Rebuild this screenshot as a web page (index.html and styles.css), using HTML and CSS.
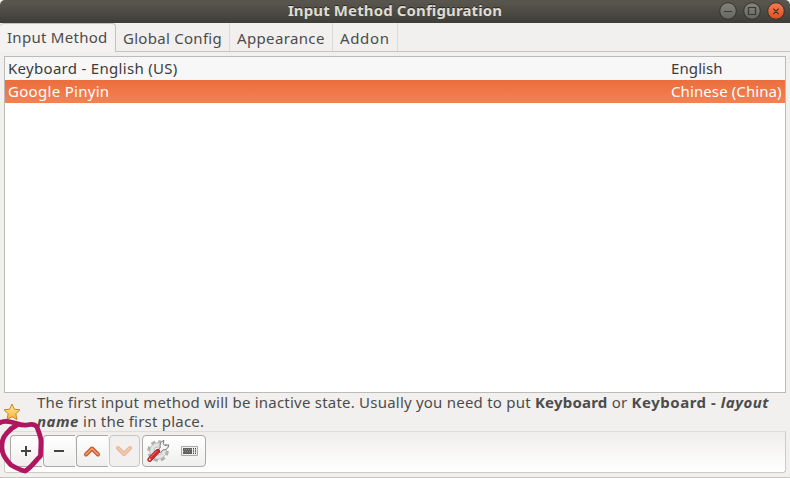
FILE: index.html
```html
<!DOCTYPE html>
<html lang="en">
<head>
<meta charset="utf-8">
<title>Input Method Configuration</title>
<link rel="stylesheet" href="styles.css">
</head>
<body>
<div class="window">
  <header class="titlebar">
    <h1>Input Method Configuration</h1>
    <div class="controls">
      <svg width="66" height="20" viewBox="0 0 66 20">
        <defs>
          <linearGradient id="grey" x2="0" y2="1"><stop stop-color="#85847d"/><stop offset="1" stop-color="#66655e"/></linearGradient>
          <linearGradient id="red" x2="0" y2="1"><stop stop-color="#f47b50"/><stop offset="1" stop-color="#e24f1c"/></linearGradient>
        </defs>
        <g stroke="#34332e"><circle cx="9" cy="10" r="8.3" fill="url(#grey)"/><circle cx="33" cy="10" r="8.3" fill="url(#grey)"/><circle cx="57" cy="10" r="8.3" fill="url(#red)"/></g>
        <path d="M5 10.5h8M29.5 6.500h7v7h-7zM54.300 7.700l5.400 5.400M59.700 7.700l-5.400 5.400" fill="none" stroke="#393832" stroke-width="1.200"/>
      </svg>
    </div>
  </header>
  <nav class="tabs">
    <div class="tab active"><span>Input Method</span></div>
    <div class="tab global"><span>Global Config</span></div>
    <div class="tab appearance"><span>Appearance</span></div>
    <div class="tab addon"><span>Addon</span></div>
  </nav>
  <main class="list">
    <div class="row first"><span>Keyboard - English (US)</span><span class="lang">English</span></div>
    <div class="row selected"><span>Google Pinyin</span><span class="lang">Chinese (China)</span></div>
  </main>
  <section class="hint">
    <svg class="star" width="18" height="18" viewBox="0 0 18 18">
      <defs><linearGradient id="gold" x2="0" y2="1"><stop stop-color="#fff0a0"/><stop offset="1" stop-color="#f5ad35"/></linearGradient></defs>
      <path d="M9 1l2.300 5.200 5.700.6-4.200 3.900 1.200 5.900L9 13.700l-5 2.900 1.200-5.900L1 6.800l5.700-.6z" fill="url(#gold)" stroke="#c98524" stroke-linejoin="round"/>
    </svg>
    <p><span class="line one">The first input method will be inactive state. Usually you need to put <b>Keyboard</b> or <b class="placement">Keyboard - <i>layout</i></b></span><span class="line two"><b class="placement"><i>name</i></b> in the first place.</span></p>
  </section>
  <footer class="toolbar">
    <div class="button add"><svg width="14" height="14" viewBox="0 0 14 14"><path d="M7 2v10M2 7h10" stroke="#444" stroke-width="2"/></svg></div>
    <div class="button remove"><svg width="14" height="14" viewBox="0 0 14 14"><path d="M2 7h10" stroke="#444" stroke-width="2"/></svg></div>
    <div class="button up"><svg width="18" height="14" viewBox="0 0 18 14"><path d="M3 10.500l6-6 6 6" fill="none" stroke="#c95728" stroke-width="4" stroke-linecap="round" stroke-linejoin="round"/><path d="M3 10.500l6-6 6 6" fill="none" stroke="#f49a70" stroke-width="1.700" stroke-linecap="round" stroke-linejoin="round"/></svg></div>
    <div class="button down"><svg width="18" height="14" viewBox="0 0 18 14"><path d="M3 4l6 6 6-6" fill="none" stroke="#e9b596" stroke-width="4" stroke-linecap="round" stroke-linejoin="round"/><path d="M3 4l6 6 6-6" fill="none" stroke="#f4ccb5" stroke-width="1.600" stroke-linecap="round" stroke-linejoin="round"/></svg></div>
    <div class="button tools">
      <svg width="24" height="24" viewBox="0 0 24 24">
        <circle cx="12" cy="12" r="9.300" fill="none" stroke="#b0b0ae" stroke-width="3" stroke-dasharray="4.300 3"/>
        <circle cx="12" cy="12" r="8.300" fill="#e3e3e1" stroke="#b0b0ae" stroke-width=".8"/><circle cx="12" cy="12" r="4" fill="#fff" stroke="#bbb"/>
        <path d="M11.500 11.500l2.900-3.100c-1-3 .5-6 3.500-7l-.6 3.400 1.500 1.700 3.800-.7c-.1 3.400-2.600 5.500-5.600 5l-3 3z" fill="#f5f5f4" stroke="#777"/>
        <path d="M11.800 12.200l-8.200 8.400" stroke="#851d1d" stroke-width="4.600" stroke-linecap="round"/>
        <path d="M11.800 12.200l-8.200 8.400" stroke="#d72c2e" stroke-width="3.400" stroke-linecap="round"/>
        <path d="M10.800 11.900l-7 7" stroke="#f27a76" stroke-width=".8"/><circle cx="3.700" cy="20.500" r=".9" fill="#fff"/>
      </svg>
      <svg width="17" height="10" viewBox="0 0 17 10"><path d="M.5.500h16v9H.5z" fill="#efefed" stroke="#aaa9a5"/><path d="M2 2h9v6H2z" fill="#60605e"/><path d="M3 3.500h7M2 5.500h8" stroke="#aaa" stroke-width=".7" stroke-dasharray="1 1"/><path d="M12.500 2v6M14.500 2v6" stroke="#444" stroke-dasharray="1.500 .8"/></svg>
    </div>
  </footer>
  <svg class="mark" width="48" height="60" viewBox="0 418 48 60"><path d="M-1 423C3 421 7 421 11 422C16 423 21 426 27 425C31 424 35 424 37 427C38 431 41 436 41 442L40.500 456C35 461 31 468 25 471C20 470 16 468 11 465C6 460 3 456 2 450C1 443 3 437 7 433Q11 428 17 425" fill="none" stroke="#b0165f" stroke-width="4.800" stroke-linecap="round" stroke-linejoin="round"/></svg>
</div>
</body>
</html>
```
FILE: styles.css
```css
* { box-sizing: border-box; }
body { margin: 0; background: #f1f0ee; color: #4c4c4c; font: 15px/19px "Noto Sans", sans-serif; }
.window { position: relative; width: 790px; height: 478px; overflow: hidden; border-bottom: 1px solid #c5c4c1; white-space: nowrap; }
.titlebar { height: 23px; display: grid; grid-template-columns: 1fr auto 1fr; align-items: center; background: linear-gradient(#58564c, #56544c 15%, #3e3d38); border-radius: 5px 5px 0 0; }
.titlebar h1 { grid-column: 2; margin: 0 0 2px; color: #dfdbd2; font-size: 15px; line-height: 21px; letter-spacing: .12px; text-shadow: 0 -1px #292824; }
.controls { justify-self: end; height: 21px; padding-right: 5px; }
.controls svg, .button svg { display: block; }
.tabs { display: flex; height: 29px; border-bottom: 1px solid #c4c2bf; letter-spacing: .28px; }
.tab { height: 28px; padding: 6px 0 0 7px; border-right: 1px solid #dddbd8; }
.active { width: 116px; height: 29px; padding-top: 4px; background: #f4f3f1; border: 1px solid #c4c2bf; border-left: 0; border-bottom: 0; border-radius: 4px 4px 0 0; }
.global { width: 114px; }
.appearance { width: 103px; letter-spacing: .36px; }
.addon { width: 65px; letter-spacing: .65px; }
.list { height: 337px; margin: 4px 4px 0; background: white; border: 1px solid #bdbbb8; }
.row { height: 23px; padding-left: 3px; line-height: 23px; display: grid; grid-template-columns: 663px 1fr; color: #3c3c3c; letter-spacing: .3px; }
.row .lang { letter-spacing: .1px; }
.row.selected { color: white; background: linear-gradient(#eb6e3d, #f48153); }
.first { background: #f7f7f7; }
.hint { height: 38px; display: flex; }
.star { margin: 10px 0 0 3px; }
.hint p { margin: 0 0 0 16px; letter-spacing: .22px; }
.hint .placement { letter-spacing: .52px; }
.line { display: block; height: 19px; }
.toolbar { height: 42px; margin: 0 4px; padding: 3px 0 0 5px; display: flex; border: 1px solid #cdcbc7; border-top-color: #dedddb; border-radius: 0 0 3px 3px; background: linear-gradient(#efeeec, #fff); }
.button { width: 32px; margin-right: 1px; height: 32px; display: flex; justify-content: center; align-items: center; padding-right: 1px; border: 1px solid #aaa9a7; border-right: 0; border-radius: 4px 0 0 4px; background: linear-gradient(#fff, #f0efee); }
.down { border: 1px solid #c8c7c5; border-radius: 4px; background: #f1f0ef; width: 31px; }
.tools { width: 64px; margin-left: 1px; border: 1px solid #aaa9a7; border-radius: 4px; justify-content: space-between; padding: 0 7px 0 3px; }
.mark { position: absolute; left: 0; top: 418px; }
```
